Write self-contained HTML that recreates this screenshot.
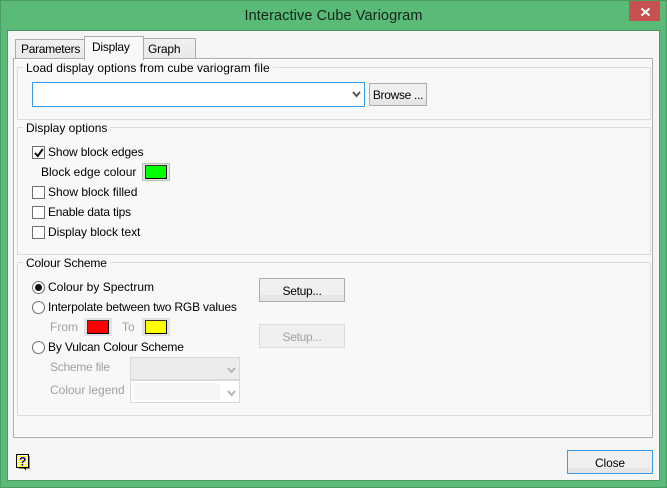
<!DOCTYPE html>
<html><head><meta charset="utf-8">
<style>
html,body{margin:0;padding:0}
body{width:667px;height:488px;overflow:hidden;position:relative;background:#5abb78;font:12px/15px "Liberation Sans",sans-serif;color:#000}
div{position:absolute;box-sizing:border-box}
.t{white-space:nowrap;height:15px}
.d{color:#a0a0a0}
.g{border:1px solid #dcdcdc}
.gt{background:#f8f8f8;padding:0 3px 0 3px;white-space:nowrap;height:15px}
.cb{width:13px;height:13px;border:1px solid #707070;background:#fff}
.r{width:13px;height:13px;border:1px solid #707070;background:#fff;border-radius:50%}
.btn{background:linear-gradient(#f0f0f0 0,#f0f0f0 72%,#e6e6e6 72%);border:1px solid #acacac;text-align:center}
.sw{background:#e2e2e2;border:1px solid #bdbdbd}
.sw div{left:2px;top:1px;width:22px;height:14px;border-right:1px solid #000;border-bottom:1px solid #000;border-top:1px solid #333;border-left:1px solid #333}
</style></head><body>
<div style="left:0;top:0;width:667px;height:488px;border:1px solid #4a9a64"></div>
<div class="t" style="left:0;top:8px;width:667px;text-align:center;font-size:14.5px;line-height:17px;height:17px;letter-spacing:.1px;color:#14241a">Interactive Cube Variogram</div>
<div style="left:629px;top:1px;width:31px;height:20px;background:#c75050"></div>
<svg style="position:absolute;left:640px;top:7px" width="11" height="10"><path d="M1.5 1.5L9.5 8.5M9.5 1.5L1.5 8.5" stroke="#fff" stroke-width="2"/></svg>
<div style="left:7px;top:30px;width:653px;height:451px;background:#f5f5f5;border:1px solid #4a9a64"></div>

<div style="left:13px;top:58px;width:640px;height:380px;background:#f8f8f8;border:1px solid #acacac;box-shadow:inset 0 0 0 1px #fff"></div>
<div style="left:15px;top:39px;width:70px;height:20px;background:linear-gradient(#f0f0f0,#e8e8e8);border:1px solid #acacac"></div>
<div style="left:143px;top:38px;width:53px;height:21px;background:linear-gradient(#f0f0f0,#e8e8e8);border:1px solid #acacac"></div>
<div style="left:84px;top:36px;width:60px;height:24px;background:#f8f8f8;border:1px solid #acacac;border-bottom:0"></div>
<div class="t" style="left:21px;top:42px;letter-spacing:-.3px">Parameters</div>
<div class="t" style="left:92px;top:40px;letter-spacing:-.25px">Display</div>
<div class="t" style="left:148px;top:42px;letter-spacing:-.2px">Graph</div>

<div class="g" style="left:17px;top:67px;width:634px;height:53px"></div>
<div class="gt" style="left:23px;top:61px;letter-spacing:.05px">Load display options from cube variogram file</div>
<div style="left:32px;top:82px;width:333px;height:25px;background:#fff;border:1px solid #3c9be8"></div>
<svg style="position:absolute;left:352px;top:90px" width="10" height="9"><path d="M1 2L4.5 6L8 2" fill="none" stroke="#555" stroke-width="2"/></svg>
<div class="btn t" style="left:369px;top:83px;width:58px;height:23px;line-height:23px;letter-spacing:-.3px">Browse ...</div>

<div class="g" style="left:17px;top:127px;width:634px;height:128px"></div>
<div class="gt" style="left:23px;top:121px">Display options</div>
<div class="cb" style="left:32px;top:146px"></div>
<svg style="position:absolute;left:33px;top:147px" width="12" height="12"><path d="M2 6L4.8 9L9.8 2" fill="none" stroke="#111" stroke-width="2"/></svg>
<div class="t" style="left:48px;top:145px;letter-spacing:-.12px">Show block edges</div>
<div class="t" style="left:41px;top:165px">Block edge colour</div>
<div class="sw" style="left:142px;top:163px;width:28px;height:18px"><div style="background:#00ff00"></div></div>
<div class="cb" style="left:32px;top:186px"></div>
<div class="t" style="left:48px;top:185px">Show block filled</div>
<div class="cb" style="left:32px;top:206px"></div>
<div class="t" style="left:48px;top:205px;letter-spacing:-.2px">Enable data tips</div>
<div class="cb" style="left:32px;top:226px"></div>
<div class="t" style="left:48px;top:225px;letter-spacing:-.06px">Display block text</div>

<div class="g" style="left:17px;top:262px;width:634px;height:154px"></div>
<div class="gt" style="left:23px;top:256px;letter-spacing:-.15px">Colour Scheme</div>
<div class="r" style="left:32px;top:281px"></div>
<div style="left:35px;top:284px;width:7px;height:7px;background:#111;border-radius:50%"></div>
<div class="t" style="left:48px;top:280px">Colour by Spectrum</div>
<div class="btn t" style="left:259px;top:278px;width:86px;height:24px;line-height:24px;letter-spacing:-.3px">Setup...</div>
<div class="r" style="left:32px;top:301px"></div>
<div class="t" style="left:48px;top:300px;letter-spacing:-.18px">Interpolate between two RGB values</div>
<div class="t d" style="left:50px;top:320px">From</div>
<div class="sw" style="left:84px;top:318px;width:28px;height:18px;border-color:#e2e2e2"><div style="background:#ff0000"></div></div>
<div class="t d" style="left:122px;top:320px">To</div>
<div class="sw" style="left:142px;top:318px;width:28px;height:18px;border-color:#e2e2e2"><div style="background:#ffff00"></div></div>
<div class="t" style="left:259px;top:324px;width:86px;height:24px;line-height:24px;text-align:center;background:#f0f0f0;border:1px solid #dcdcdc;color:#a0a0a0;letter-spacing:-.3px">Setup...</div>
<div class="r" style="left:32px;top:341px"></div>
<div class="t" style="left:48px;top:340px;letter-spacing:-.17px">By Vulcan Colour Scheme</div>
<div class="t d" style="left:50px;top:360px;letter-spacing:-.27px">Scheme file</div>
<div style="left:130px;top:357px;width:110px;height:23px;background:#ececec;border:1px solid #d9d9d9"></div>
<svg style="position:absolute;left:227px;top:366px" width="10" height="9"><path d="M1 2L4.5 6L8 2" fill="none" stroke="#b5b5b5" stroke-width="2"/></svg>
<div class="t d" style="left:50px;top:383px">Colour legend</div>
<div style="left:130px;top:380px;width:110px;height:23px;background:#fff;border:1px solid #d9d9d9"></div>
<div style="left:133px;top:383px;width:87px;height:17px;background:#f6f6f6"></div>
<svg style="position:absolute;left:227px;top:389px" width="10" height="9"><path d="M1 2L4.5 6L8 2" fill="none" stroke="#b5b5b5" stroke-width="2"/></svg>

<svg style="position:absolute;left:16px;top:454px" width="15" height="17">
<defs><pattern id="p" width="2" height="2" patternUnits="userSpaceOnUse"><rect width="2" height="2" fill="#fff"/><rect width="1" height="1" fill="#ffff00"/><rect x="1" y="1" width="1" height="1" fill="#ffff00"/></pattern></defs>
<path d="M3 2H14V15H3Z" fill="#8a8a8a"/>
<path d="M.5 .5H12.5V13.5H.5Z" fill="url(#p)" stroke="#000"/>
<path d="M8 14L10 16.500V14Z" fill="#000"/>
<text x="3" y="11.500" font-family="Liberation Sans,sans-serif" font-size="12" font-weight="bold" fill="#000080">?</text>
</svg>
<div class="t" style="left:567px;top:450px;width:86px;height:24px;line-height:24px;text-align:center;letter-spacing:-.15px;background:linear-gradient(#f0f0f0 0,#f0f0f0 75%,#e6e6e6 75%);border:1px solid #3c9be8">Close</div>
</body></html>
